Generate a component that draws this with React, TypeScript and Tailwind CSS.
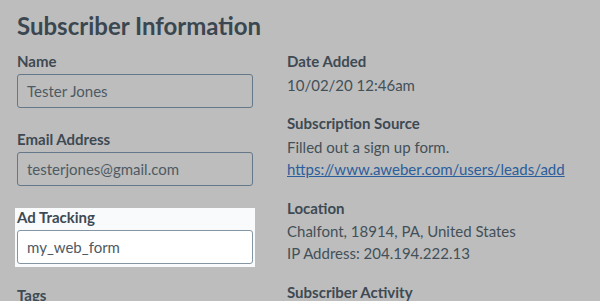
import React from "react";

const font = { fontFamily: "Lato, 'Open Sans', sans-serif" };

function Field({ label, value }: { label: string; value: string }) {
  return (
    <div className="h-[78px]">
      <div className="text-[15px] font-bold text-[#3e4a53] leading-[18px] h-[18px]">{label}</div>
      <div className="mt-[4px] h-[34px] rounded-[3px] border border-[#65788a] px-[9px] flex items-center text-[15px] text-[#4e5a63]">
        {value}
      </div>
    </div>
  );
}

export default function App() {
  return (
    <div className="w-[600px] h-[301px] overflow-hidden bg-[#bdbdbd] text-[#3e4a53]" style={font}>
      <div className="pl-[17px] pt-[10px]">
        <h1 className="text-[24px] font-bold leading-[32px] text-[#3b4750]">Subscriber Information</h1>
        <div className="flex mt-[8px]">
          <div className="w-[236px] flex flex-col pt-[2px]">
            <Field label="Name" value="Tester Jones" />
            <Field label="Email Address" value="testerjones@gmail.com" />
            <div className="h-[78px]">
              <div className="-mx-[2px] px-[2px] pb-[3px] bg-[#f9fafb]">
                <div className="text-[15px] font-bold text-[#3e4a53] leading-[18px] h-[18px]">Ad Tracking</div>
                <div className="mt-[4px] h-[34px] rounded-[3px] border border-[#8496a3] bg-white px-[9px] flex items-center text-[15px] text-[#4e5a63]">
                  my_web_form
                </div>
              </div>
            </div>
            <div className="text-[15px] font-bold leading-[18px]">Tags</div>
          </div>
          <div className="ml-[34px] text-[15px] leading-[22px] text-[#435058]">
            <div className="font-bold text-[#3e4a53]">Date Added</div>
            <div className="mt-[2px]">10/02/20 12:46am</div>
            <div className="font-bold mt-[16px] text-[#3e4a53]">Subscription Source</div>
            <div className="mt-[2px]">Filled out a sign up form.</div>
            <div className="underline text-[#2b5e9c]">https://www.aweber.com/users/leads/add</div>
            <div className="font-bold mt-[17px] text-[#3e4a53]">Location</div>
            <div className="mt-[1px]">Chalfont, 18914, PA, United States</div>
            <div>IP Address: 204.194.222.13</div>
            <div className="font-bold mt-[17px] text-[#3e4a53]">Subscriber Activity</div>
          </div>
        </div>
      </div>
    </div>
  );
}
